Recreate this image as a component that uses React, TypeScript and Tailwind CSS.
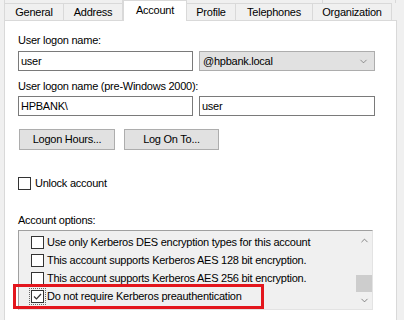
import React from 'react';
import { ChevronDown, ChevronUp } from 'lucide-react';

const tabs = [
  { label: 'General', w: 'w-[60px]' },
  { label: 'Address', w: 'w-[60px]' },
  { label: 'Account', w: 'w-[64px]', active: true },
  { label: 'Profile', w: 'w-[50px]' },
  { label: 'Telephones', w: 'w-[78px]' },
  { label: 'Organization', w: 'w-[80px]' },
];

const options = [
  { label: 'Use only Kerberos DES encryption types for this account' },
  { label: 'This account supports Kerberos AES 128 bit encryption.' },
  { label: 'This account supports Kerberos AES 256 bit encryption.' },
  { label: 'Do not require Kerberos preauthentication', checked: true },
];

const Check: React.FC<{ checked?: boolean }> = ({ checked }) => (
  <div className="w-[13px] h-[13px] border border-[#333333] bg-white flex items-center justify-center">
    {checked && (
      <svg width="11" height="11" viewBox="0 0 11 11">
        <polyline points="2,5.5 4.5,8 9,3" fill="none" stroke="#333" strokeWidth="1.2" />
      </svg>
    )}
  </div>
);

export default function App() {
  return (
    <div
      className="relative w-[404px] h-[320px] overflow-hidden bg-[#f0f0f0] text-black text-[11px] leading-[13px] tracking-[-0.25px]"
      style={{ fontFamily: '"Liberation Sans", Arial, sans-serif' }}
    >
      {/* back row of tabs */}
      <div className="ml-[4px] w-[392px] h-[3px] flex border-x border-[#d9d9d9]">
        <div className="w-[118px] border-r border-[#d9d9d9]" />
        <div className="w-[200px] border-r border-[#d9d9d9]" />
        <div className="flex-1" />
      </div>

      {/* front row of tabs */}
      <div className="ml-[4px] h-[17px] flex relative z-10">
        {tabs.map(t =>
          t.active ? (
            <div
              key={t.label}
              className={`${t.w} h-[21px] -mt-[3px] bg-white border border-b-0 border-[#d9d9d9] flex items-center justify-center pb-[1px]`}
            >
              {t.label}
            </div>
          ) : (
            <div
              key={t.label}
              className={`${t.w} h-[17px] bg-[#f0f0f0] border border-b-0 border-[#d9d9d9] -ml-px first:ml-0 flex items-center justify-center pt-[1px]`}
            >
              {t.label}
            </div>
          )
        )}
      </div>

      {/* panel */}
      <div className="ml-[4px] w-[393px] h-[310px] bg-white border border-[#d9d9d9] pl-[13px] pt-[13px] flex flex-col">
        <div>User logon name:</div>
        <div className="flex gap-[6px] mt-[4px]">
          <div className="w-[175px] h-[20px] border border-[#7a7a7a] pl-[2px] flex items-center">user</div>
          <div className="w-[176px] h-[20px] border border-[#adadad] bg-[#e1e1e1] pl-[3px] pr-[5px] flex items-center justify-between">
            <span>@hpbank.local</span>
            <ChevronDown size={11} strokeWidth={1.3} color="#555" />
          </div>
        </div>

        <div className="mt-[9px]">User logon name (pre-Windows 2000):</div>
        <div className="flex gap-[6px] mt-[3px]">
          <div className="w-[175px] h-[20px] border border-[#7a7a7a] pl-[2px] flex items-center">HPBANK\</div>
          <div className="w-[176px] h-[20px] border border-[#7a7a7a] pl-[2px] flex items-center">user</div>
        </div>

        <div className="flex gap-[9px] mt-[13px] ml-[1px]">
          <div className="w-[96px] h-[21px] border border-[#adadad] bg-[#e1e1e1] flex items-center justify-center">
            Logon Hours...
          </div>
          <div className="w-[95px] h-[21px] border border-[#adadad] bg-[#e1e1e1] flex items-center justify-center">
            Log On To...
          </div>
        </div>

        <div className="flex items-center gap-[4px] mt-[27px]">
          <Check />
          <span>Unlock account</span>
        </div>

        <div className="mt-[24px]">Account options:</div>

        <div className="mt-[3px] w-[355px] h-[80px] bg-[#f0f0f0] border border-t-[#a0a0a0] border-l-[#a0a0a0] border-r-[#e3e3e3] border-b-[#e3e3e3] flex">
          <div className="flex-1 pt-[2px] pl-[10px]">
            {options.map(o => (
              <div key={o.label} className="h-[18px] flex items-center">
                <div
                  className={`w-[17px] h-[17px] flex items-center justify-center border border-dotted ${
                    o.checked ? 'border-[#666]' : 'border-transparent'
                  }`}
                >
                  <Check checked={o.checked} />
                </div>
                <span className="ml-[1px] whitespace-nowrap">{o.label}</span>
              </div>
            ))}
          </div>
          <div className="w-[16px] flex flex-col items-center">
            <div className="h-[17px] w-full flex items-center justify-center mt-[1px]">
              <ChevronUp size={11} strokeWidth={1.6} color="#606060" />
            </div>
            <div className="flex-1 w-full flex flex-col justify-end">
              <div className="h-[17px] w-full bg-[#cdcdcd]" />
            </div>
            <div className="h-[17px] w-full flex items-center justify-center">
              <ChevronDown size={11} strokeWidth={1.6} color="#606060" />
            </div>
          </div>
        </div>
      </div>

      {/* highlight */}
      <div className="absolute left-[13px] top-[284px] w-[251px] h-[25px] border-[3px] border-[#e3161d]" />
    </div>
  );
}
